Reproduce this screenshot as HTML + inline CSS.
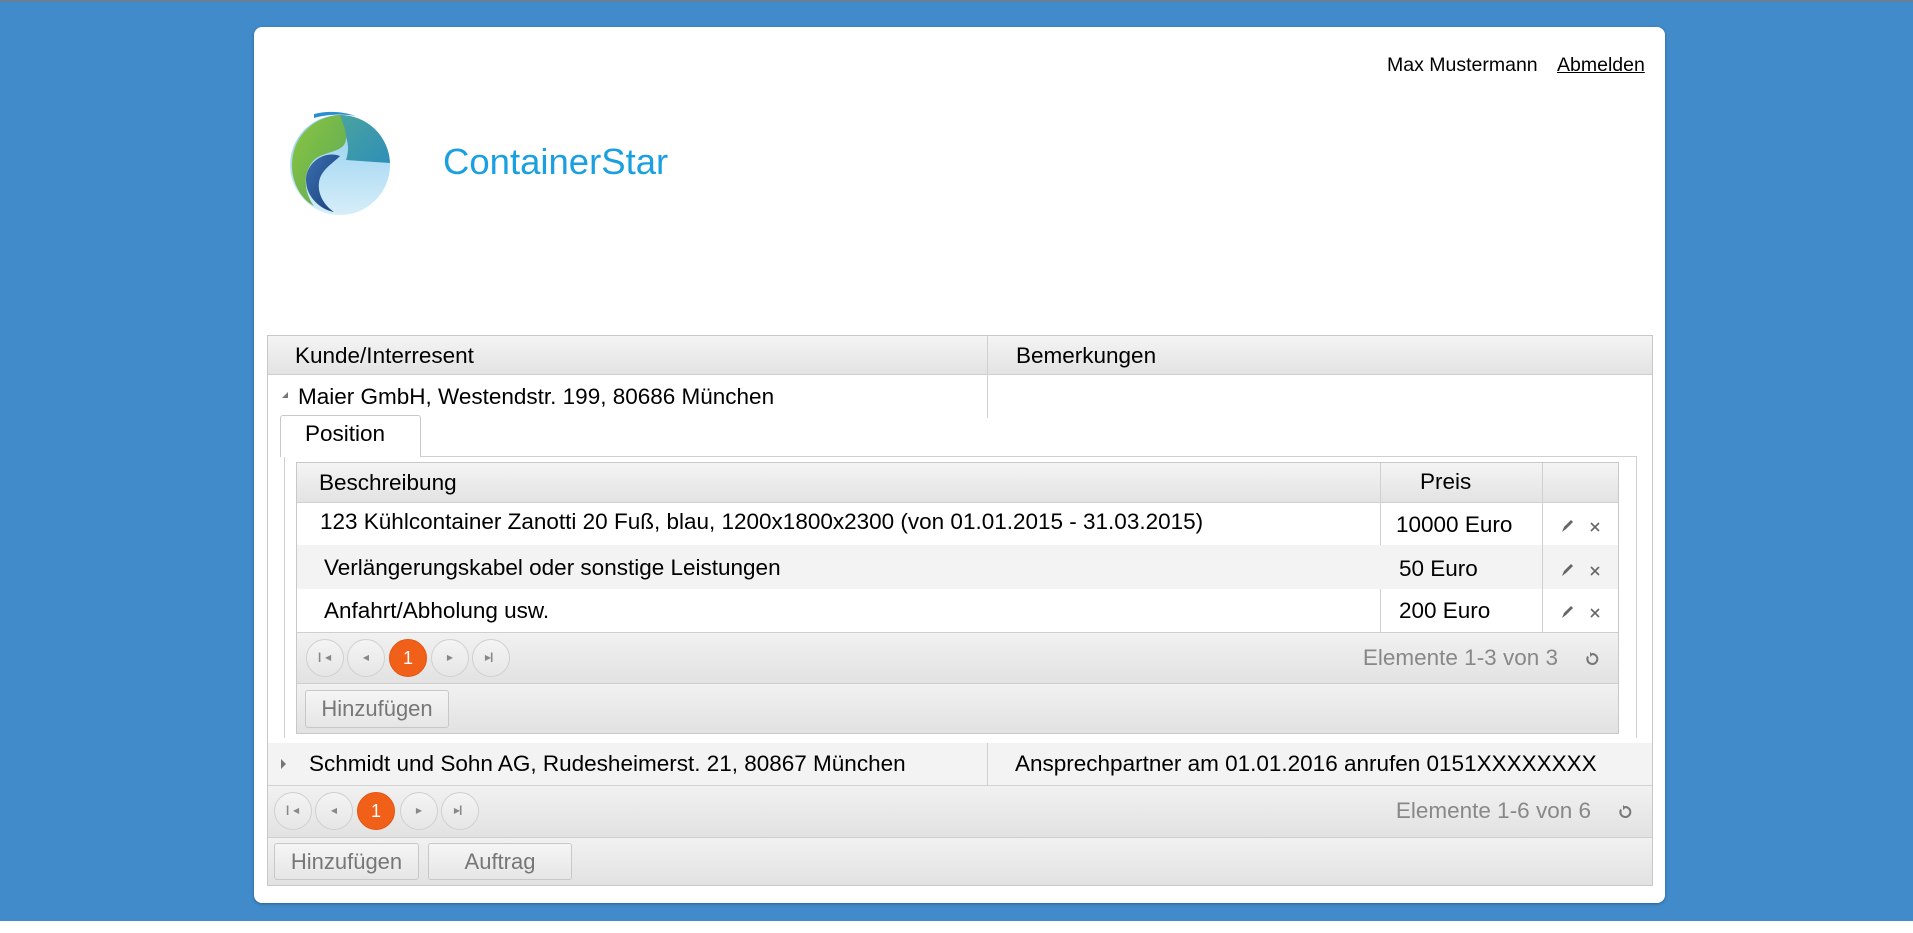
<!DOCTYPE html>
<html><head><meta charset="utf-8"><style>
*{box-sizing:border-box;margin:0;padding:0}
body{width:1913px;height:933px;background:#fff;font-family:"Liberation Sans",Arial,sans-serif;position:relative;overflow:hidden;color:#000}
.bg{position:absolute;left:0;top:2px;width:1913px;height:919px;background:#418bca}
.topline{position:absolute;left:0;top:0;width:1913px;height:2px;background:#6a7f95}
.card{position:absolute;left:254px;top:27px;width:1411px;height:876px;background:#fff;border-radius:8px;box-shadow:0 1px 3px rgba(0,0,0,.3)}
.a{position:absolute}
.t{position:absolute;font-size:22.5px;white-space:nowrap;line-height:26px}
.hdr{background:linear-gradient(#f4f4f4,#e3e3e3)}
.bar{background:linear-gradient(#f1f1f1,#e2e2e2)}
.circ{position:absolute;width:38px;height:38px;border-radius:50%;border:1px solid #d0d0d0;background:linear-gradient(#f4f4f4,#e6e6e6);font-size:8px;color:#888;text-align:center;line-height:36px}
.circ.on{background:#f06018;border-color:#e55510;color:#fff;font-size:18px}
.btn{position:absolute;border:1px solid #c8c8c8;border-radius:3px;background:linear-gradient(#f5f5f5,#e6e6e6);color:#777;font-size:22px;text-align:center}
.gray{color:#888}
</style></head><body>
<div class="topline"></div>
<div class="bg"></div>
<div class="card"></div>

<div class="t" style="left:1387px;top:52px;font-size:19.5px">Max Mustermann</div>
<div class="t" style="left:1557px;top:52px;font-size:19.5px;text-decoration:underline">Abmelden</div>

<svg class="a" style="left:284px;top:108px" width="112" height="112" viewBox="0 0 112 112">
<defs>
<linearGradient id="g1" x1="0" y1="0" x2="1" y2="1"><stop offset="0" stop-color="#8cc63f"/><stop offset="1" stop-color="#5aa85a"/></linearGradient>
<linearGradient id="g2" x1="0" y1="0" x2="1" y2="1"><stop offset="0" stop-color="#4aa3a0"/><stop offset="1" stop-color="#2e8fb8"/></linearGradient>
<linearGradient id="g3" x1="0" y1="0" x2="0" y2="1"><stop offset="0" stop-color="#8fcdf0"/><stop offset="1" stop-color="#d6eef9"/></linearGradient>
<linearGradient id="g4" x1="0" y1="0" x2="1" y2="1"><stop offset="0" stop-color="#3a6fb0"/><stop offset="1" stop-color="#1a3f7a"/></linearGradient>
</defs>
<ellipse cx="56" cy="57" rx="50" ry="50" fill="url(#g3)"/>
<path d="M56 7 A50 50 0 0 1 106 55 L62 52 C66 40 64 28 56 20 Z" fill="url(#g2)"/>
<path d="M56 7 C40 7 10 20 8 55 C7 75 18 92 30 98 C20 85 18 65 30 52 C42 42 62 45 62 30 C62 20 58 14 56 7 Z" fill="url(#g1)"/>
<path d="M56 48 C40 42 22 55 22 72 C22 90 38 102 50 104 C38 96 32 82 36 70 C40 60 48 56 56 48 Z" fill="url(#g4)"/>
<path d="M30 6 C45 2 60 4 72 8 C60 6 45 6 30 10 Z" fill="#2a8fd0"/>
</svg>
<div class="t" style="left:443px;top:141px;font-size:36.5px;line-height:42px;color:#1a9fe0">ContainerStar</div>

<!-- outer table -->
<div class="a" style="left:267px;top:335px;width:1386px;height:551px;border:1px solid #c8c8c8"></div>
<div class="a hdr" style="left:268px;top:336px;width:1384px;height:39px;border-bottom:1px solid #cfcfcf"></div>
<div class="a" style="left:987px;top:336px;width:1px;height:82px;background:#d0d0d0"></div>
<div class="t" style="left:295px;top:343px">Kunde/Interresent</div>
<div class="t" style="left:1016px;top:343px">Bemerkungen</div>
<div class="a" style="left:282px;top:392px;width:0;height:0;border-left:6px solid transparent;border-bottom:6px solid #777"></div>
<div class="t" style="left:298px;top:384px">Maier GmbH, Westendstr. 199, 80686 München</div>

<!-- tab -->
<div class="a" style="left:284px;top:456px;width:1353px;height:282px;border:1px solid #d0d0d0;border-bottom:none"></div>
<div class="a" style="left:280px;top:415px;width:141px;height:42px;border:1px solid #c8c8c8;border-bottom:none;border-radius:3px 3px 0 0;background:#fff"></div>
<div class="t" style="left:305px;top:421px">Position</div>

<!-- inner grid -->
<div class="a" style="left:296px;top:462px;width:1323px;height:272px;border:1px solid #c8c8c8"></div>
<div class="a hdr" style="left:297px;top:463px;width:1321px;height:40px;border-bottom:1px solid #cfcfcf"></div>
<div class="a" style="left:1380px;top:463px;width:1px;height:169px;background:#d0d0d0"></div>
<div class="a" style="left:1542px;top:463px;width:1px;height:169px;background:#d0d0d0"></div>
<div class="t" style="left:319px;top:470px">Beschreibung</div>
<div class="t" style="left:1420px;top:469px">Preis</div>
<div class="a" style="left:297px;top:545px;width:1245px;height:44px;background:#f3f3f3"></div>
<div class="a" style="left:1543px;top:545px;width:75px;height:44px;background:#f3f3f3"></div>
<div class="a" style="left:1381px;top:545px;width:161px;height:44px;background:#f3f3f3"></div>
<div class="t" style="left:320px;top:509px">123 Kühlcontainer Zanotti 20 Fuß, blau, 1200x1800x2300 (von 01.01.2015 - 31.03.2015)</div>
<div class="t" style="left:1396px;top:512px">10000 Euro</div>
<div class="t" style="left:324px;top:555px">Verlängerungskabel oder sonstige Leistungen</div>
<div class="t" style="left:1399px;top:556px">50 Euro</div>
<div class="t" style="left:324px;top:598px">Anfahrt/Abholung usw.</div>
<div class="t" style="left:1399px;top:598px">200 Euro</div>
<svg class="a" style="left:1558px;top:514px" width="50" height="110" viewBox="0 0 50 110">
<g fill="#666"><path d="M4 18 L6 13 L13 6 L15 8 L8 15 Z"/><path d="M4 62 L6 57 L13 50 L15 52 L8 59 Z"/><path d="M4 104 L6 99 L13 92 L15 94 L8 101 Z"/></g>
<g stroke="#666" stroke-width="1.6"><path d="M33 9 L41 17 M41 9 L33 17"/><path d="M33 53 L41 61 M41 53 L33 61"/><path d="M33 95 L41 103 M41 95 L33 103"/></g>
</svg>
<!-- inner pager -->
<div class="a bar" style="left:297px;top:632px;width:1321px;height:52px;border-top:1px solid #cfcfcf;border-bottom:1px solid #cfcfcf"></div>
<div class="circ" style="left:306px;top:639px">&#9614;&#9664;</div>
<div class="circ" style="left:347px;top:639px">&#9664;</div>
<div class="circ on" style="left:389px;top:639px">1</div>
<div class="circ" style="left:431px;top:639px">&#9654;</div>
<div class="circ" style="left:472px;top:639px">&#9654;&#9614;</div>
<div class="t gray" style="right:355px;top:645px">Elemente 1-3 von 3</div>
<svg class="a" style="left:1585px;top:651px" width="14" height="16" viewBox="0 0 14 16"><path d="M7 3 A5 5 0 1 1 3 5.5" fill="none" stroke="#777" stroke-width="2"/><path d="M5 1 L8 3.5 L5 6 Z" fill="#777"/></svg>
<div class="a bar" style="left:297px;top:684px;width:1321px;height:49px"></div>
<div class="btn" style="left:305px;top:690px;width:144px;height:38px;line-height:36px">Hinzufügen</div>

<!-- row 2 -->
<div class="a" style="left:268px;top:743px;width:1384px;height:43px;background:#f3f3f3;border-bottom:1px solid #d0d0d0"></div>
<div class="a" style="left:987px;top:743px;width:1px;height:43px;background:#d0d0d0"></div>
<div class="a" style="left:281px;top:759px;width:0;height:0;border-top:5px solid transparent;border-bottom:5px solid transparent;border-left:5px solid #777"></div>
<div class="t" style="left:309px;top:751px">Schmidt und Sohn AG, Rudesheimerst. 21, 80867 München</div>
<div class="t" style="left:1015px;top:751px">Ansprechpartner am 01.01.2016 anrufen 0151XXXXXXXX</div>

<!-- outer pager -->
<div class="a bar" style="left:268px;top:786px;width:1384px;height:52px;border-bottom:1px solid #cfcfcf"></div>
<div class="circ" style="left:274px;top:792px">&#9614;&#9664;</div>
<div class="circ" style="left:315px;top:792px">&#9664;</div>
<div class="circ on" style="left:357px;top:792px">1</div>
<div class="circ" style="left:400px;top:792px">&#9654;</div>
<div class="circ" style="left:441px;top:792px">&#9654;&#9614;</div>
<div class="t gray" style="right:322px;top:798px">Elemente 1-6 von 6</div>
<svg class="a" style="left:1618px;top:804px" width="14" height="16" viewBox="0 0 14 16"><path d="M7 3 A5 5 0 1 1 3 5.5" fill="none" stroke="#777" stroke-width="2"/><path d="M5 1 L8 3.5 L5 6 Z" fill="#777"/></svg>
<div class="a bar" style="left:268px;top:838px;width:1384px;height:47px"></div>
<div class="btn" style="left:274px;top:843px;width:145px;height:37px;line-height:35px">Hinzufügen</div>
<div class="btn" style="left:428px;top:843px;width:144px;height:37px;line-height:35px">Auftrag</div>
</body></html>
